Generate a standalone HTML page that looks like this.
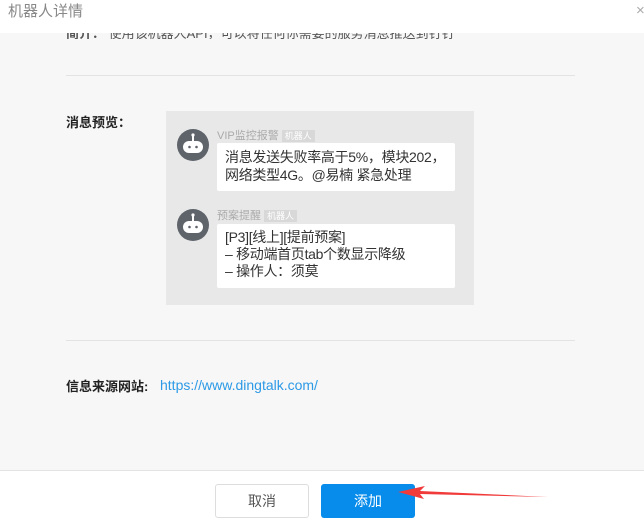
<!DOCTYPE html>
<html><head><meta charset="utf-8"><style>
*{margin:0;padding:0;box-sizing:border-box}
body{width:644px;height:527px;overflow:hidden;background:#f7f7f7;font-family:"Liberation Sans","Noto Sans CJK SC",sans-serif;position:relative;color:#333}
.abs{position:absolute}
.hdr{left:0;top:0;width:644px;height:33px;background:#fff}
.line{height:1px;background:#e3e3e3}
.box{left:166px;top:111px;width:308px;height:194px;background:#e8e8e8}
.av{width:32px;height:32px;border-radius:50%;background:#5f646b}
.nm{font-size:11px;color:#aaa}
.tag{display:inline-block;background:#d8d8d8;color:#fff;font-size:9px;padding:0 3px;margin-left:3px;line-height:12px}
.bub{background:#fff;border-radius:2px;font-size:14px;line-height:18px;color:#333;padding:5px 8px;white-space:nowrap;letter-spacing:-0.3px}
.btn{top:484px;width:94px;height:34px;border-radius:3px;font-size:14px;text-align:center;line-height:32px}
</style></head><body>
<div class="abs hdr"></div>
<div class="abs" style="left:8px;top:0px;font-size:15px;color:#888">机器人详情</div>
<div class="abs" style="left:636px;top:2px;font-size:15px;color:#aaa">×</div>
<div class="abs" style="left:66px;top:33px;height:6px;overflow:hidden;width:500px"><div style="margin-top:-10px;font-size:13px;color:#555;white-space:nowrap"><b>简介：</b> 使用该机器人API，可以将任何你需要的服务消息推送到钉钉</div></div>
<div class="abs line" style="left:66px;top:75px;width:509px"></div>
<div class="abs" style="left:66px;top:112px;font-size:13px;font-weight:bold;color:#222">消息预览：</div>
<div class="abs box"></div>
<div class="abs av" style="left:177px;top:129px"></div>
<div class="abs av" style="left:177px;top:209px"></div>
<svg class="abs" style="left:177px;top:129px" width="32" height="112"><g fill="#fff"><rect x="6" y="12" width="20" height="12" rx="6"/><rect x="15" y="6" width="2" height="7"/><circle cx="16" cy="6" r="1.6"/><rect x="6" y="92" width="20" height="12" rx="6"/><rect x="15" y="86" width="2" height="7"/><circle cx="16" cy="86" r="1.6"/></g><g fill="#5f646b"><circle cx="12.5" cy="18" r="1.3"/><circle cx="19.5" cy="18" r="1.3"/><circle cx="12.5" cy="98" r="1.3"/><circle cx="19.5" cy="98" r="1.3"/></g></svg>
<div class="abs nm" style="left:217px;top:127px">VIP监控报警<span class="tag">机器人</span></div>
<div class="abs bub" style="left:217px;top:143px;width:238px;height:48px">消息发送失败率高于5%，模块202，<br>网络类型4G。@易楠 紧急处理</div>
<div class="abs nm" style="left:217px;top:207px">预案提醒<span class="tag">机器人</span></div>
<div class="abs bub" style="left:217px;top:224px;width:238px;height:64px;padding-top:5px;line-height:17px">[P3][线上][提前预案]<br>– 移动端首页tab个数显示降级<br>– 操作人：须莫</div>
<div class="abs line" style="left:66px;top:340px;width:509px"></div>
<div class="abs" style="left:66px;top:376px;font-size:13px;font-weight:bold;color:#222">信息来源网站:</div>
<div class="abs" style="left:160px;top:377px;font-size:14px;color:#2d9ae6">https://www.dingtalk.com/</div>
<div class="abs" style="left:0;top:470px;width:644px;height:57px;background:#fff;border-top:1px solid #e3e3e3"></div>
<div class="abs btn" style="left:215px;border:1px solid #ddd;background:#fff;color:#555">取消</div>
<div class="abs btn" style="left:321px;background:#078ceb;color:#fff;line-height:34px">添加</div>
<svg class="abs" style="left:390px;top:480px" width="160" height="30"><polygon points="8,12 35,6 30,11 158,17 30,14 34,19" fill="#f13a3a"/></svg>
</body></html>
